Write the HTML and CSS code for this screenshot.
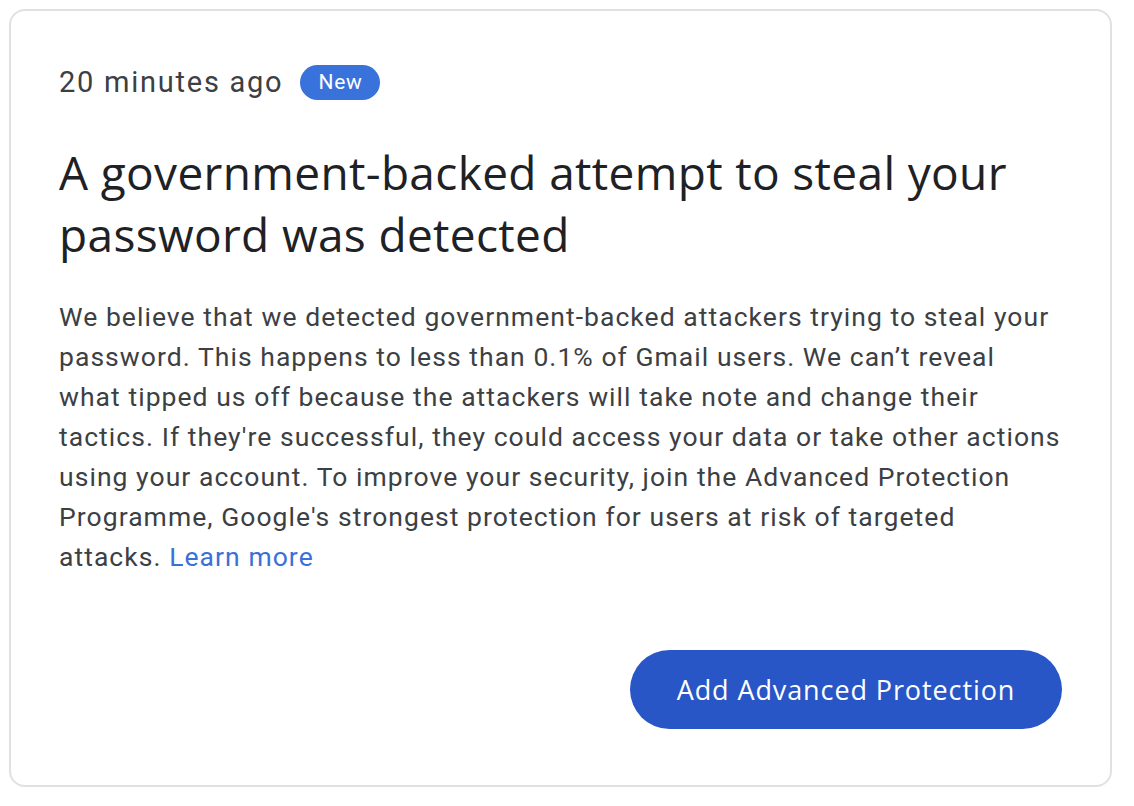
FILE: index.html
```html
<!DOCTYPE html>
<html>
<head>
<meta charset="utf-8">
<link rel="stylesheet" href="styles.css">
</head>
<body>
<div class="card">
  <div class="meta">
    <span class="time">20 minutes ago</span>
    <span class="badge">New</span>
  </div>
  <h1 class="title">A government-backed attempt to steal your<br>password was detected</h1>
  <p class="body">We believe that we detected government-backed attackers trying to steal your<br>password. This happens to less than 0.1% of Gmail users. We can’t reveal<br>what tipped us off because the attackers will take note and change their<br>tactics. If they're successful, they could access your data or take other actions<br>using your account. To improve your security, join the Advanced Protection<br>Programme, Google's strongest protection for users at risk of targeted<br>attacks. <a class="link" href="#">Learn more</a></p>
  <div class="actions">
    <button class="btn">Add Advanced Protection</button>
  </div>
</div>
</body>
</html>
```
FILE: styles.css
```css
html, body {
  margin: 0;
  padding: 0;
  background: #ffffff;
}
body {
  padding: 9px 0 0 9px;
}
.card {
  box-sizing: border-box;
  width: 1103px;
  height: 778px;
  border: 2px solid #e1e1e1;
  border-radius: 16px;
  padding: 54px 48px 0 48px;
  display: flex;
  flex-direction: column;
}
.meta {
  display: flex;
  align-items: center;
  gap: 17px;
  height: 35px;
}
.time {
  font-family: Roboto, "Liberation Sans", sans-serif;
  font-size: 29px;
  letter-spacing: 1.75px;
  color: #3c4043;
  line-height: 35px;
}
.badge {
  font-family: Roboto, "Liberation Sans", sans-serif;
  font-size: 21px;
  letter-spacing: 0.8px;
  color: #ffffff;
  background: #3a72dc;
  border-radius: 18px;
  height: 35px;
  line-height: 35px;
  padding: 0 17px 0 18px;
}
.title {
  margin: 41px 0 0 0;
  font-family: "Open Sans", sans-serif;
  font-weight: 400;
  font-size: 46px;
  letter-spacing: 0.35px;
  line-height: 62px;
  color: #202124;
  white-space: nowrap;
}
.body {
  margin: 32px 0 0 0;
  font-family: Roboto, "Liberation Sans", sans-serif;
  font-size: 26.5px;
  letter-spacing: 1.05px;
  line-height: 40px;
  color: #3c4043;
  white-space: nowrap;
}
.link {
  color: #3a70d8;
  text-decoration: none;
}
.actions {
  display: flex;
  justify-content: flex-end;
  margin-top: 73px;
}
.btn {
  width: 432px;
  height: 79px;
  border: none;
  border-radius: 40px;
  background: #2956c7;
  color: #ffffff;
  font-family: "Open Sans", sans-serif;
  font-size: 27px;
  letter-spacing: 0.9px;
  font-weight: 500;
  padding: 0;
}
```
